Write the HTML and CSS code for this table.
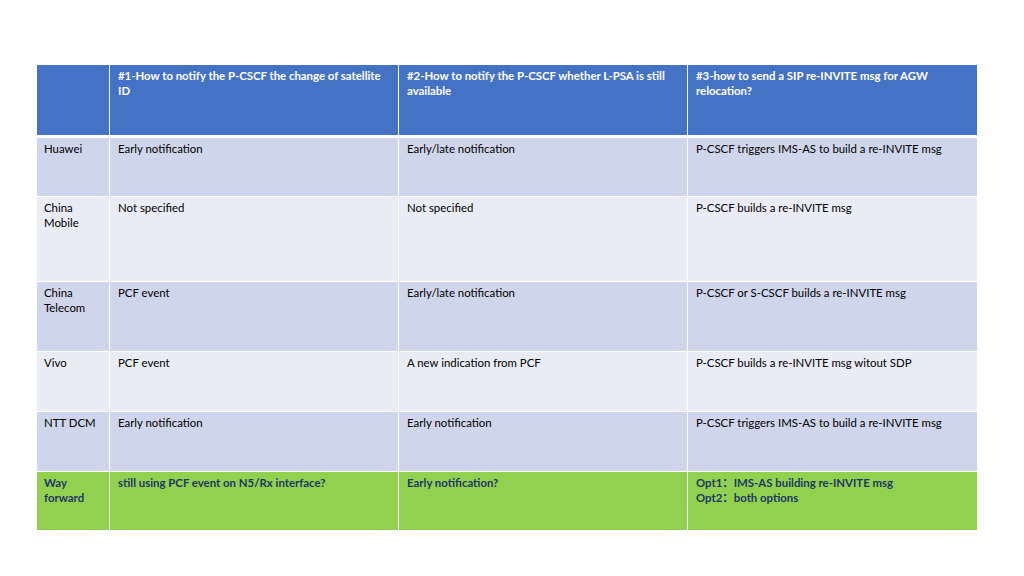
FILE: index.html
```html
<!DOCTYPE html>
<html>
<head>
<meta charset="utf-8">
<link rel="stylesheet" href="styles.css">
</head>
<body>
<table class="grid">
  <colgroup>
    <col class="c0"><col class="c1"><col class="c2"><col class="c3">
  </colgroup>
  <tr class="head">
    <td></td>
    <td>#1-How to notify the P-CSCF the change of satellite ID</td>
    <td>#2-How to notify the P-CSCF whether L-PSA is still available</td>
    <td>#3-how to send a SIP re-INVITE msg for AGW relocation?</td>
  </tr>
  <tr class="odd r1">
    <td>Huawei</td>
    <td>Early notification</td>
    <td>Early/late notification</td>
    <td>P-CSCF triggers IMS-AS to build a re-INVITE msg</td>
  </tr>
  <tr class="even r2">
    <td>China Mobile</td>
    <td>Not specified</td>
    <td>Not specified</td>
    <td>P-CSCF builds a re-INVITE msg</td>
  </tr>
  <tr class="odd r3">
    <td>China Telecom</td>
    <td>PCF event</td>
    <td>Early/late notification</td>
    <td>P-CSCF or S-CSCF builds a re-INVITE msg</td>
  </tr>
  <tr class="even r4">
    <td>Vivo</td>
    <td>PCF event</td>
    <td>A new indication from PCF</td>
    <td>P-CSCF builds a re-INVITE msg witout SDP</td>
  </tr>
  <tr class="odd r5">
    <td>NTT DCM</td>
    <td>Early notification</td>
    <td>Early notification</td>
    <td>P-CSCF triggers IMS-AS to build a re-INVITE msg</td>
  </tr>
  <tr class="green r6">
    <td>Way forward</td>
    <td>still using PCF event on N5/Rx interface?</td>
    <td>Early notification?</td>
    <td>Opt1：IMS-AS building re-INVITE msg<br>Opt2：both options</td>
  </tr>
</table>
</body>
</html>
```
FILE: styles.css
```css
html, body {
  margin: 0;
  padding: 0;
  background: #ffffff;
}
body {
  padding: 64px 0 0 36px;
  font-family: "Lato", "Noto Sans CJK SC", sans-serif;
  font-size: 11.4px;
  line-height: 15px;
  color: #000000;
}
.grid {
  border-collapse: collapse;
  table-layout: fixed;
  width: 941px;
}
.c0 { width: 73px; }
.c1 { width: 289px; }
.c2 { width: 289px; }
.c3 { width: 290px; }
.grid td {
  border: 1px solid #ffffff;
  vertical-align: top;
  padding: 3px 7px 0 8px;
  box-sizing: border-box;
}
.grid td:first-child {
  padding-left: 7px;
}
.head td {
  background: #4472c4;
  color: #ffffff;
  font-weight: bold;
  height: 72px;
  border-bottom: 3px solid #ffffff;
  padding-top: 3px;
}
.odd td { background: #cfd5ea; padding-top: 3px; }
.even td { background: #e9ebf5; padding-top: 3px; }
.green td {
  background: #92d050;
  color: #1f3864;
  font-weight: bold;
  padding-top: 3px;
}
.r1 td { height: 60px; }
.r2 td { height: 85px; }
.r3 td { height: 70px; }
.r4 td { height: 60px; }
.r5 td { height: 60px; }
.r6 td { height: 59px; }
```
